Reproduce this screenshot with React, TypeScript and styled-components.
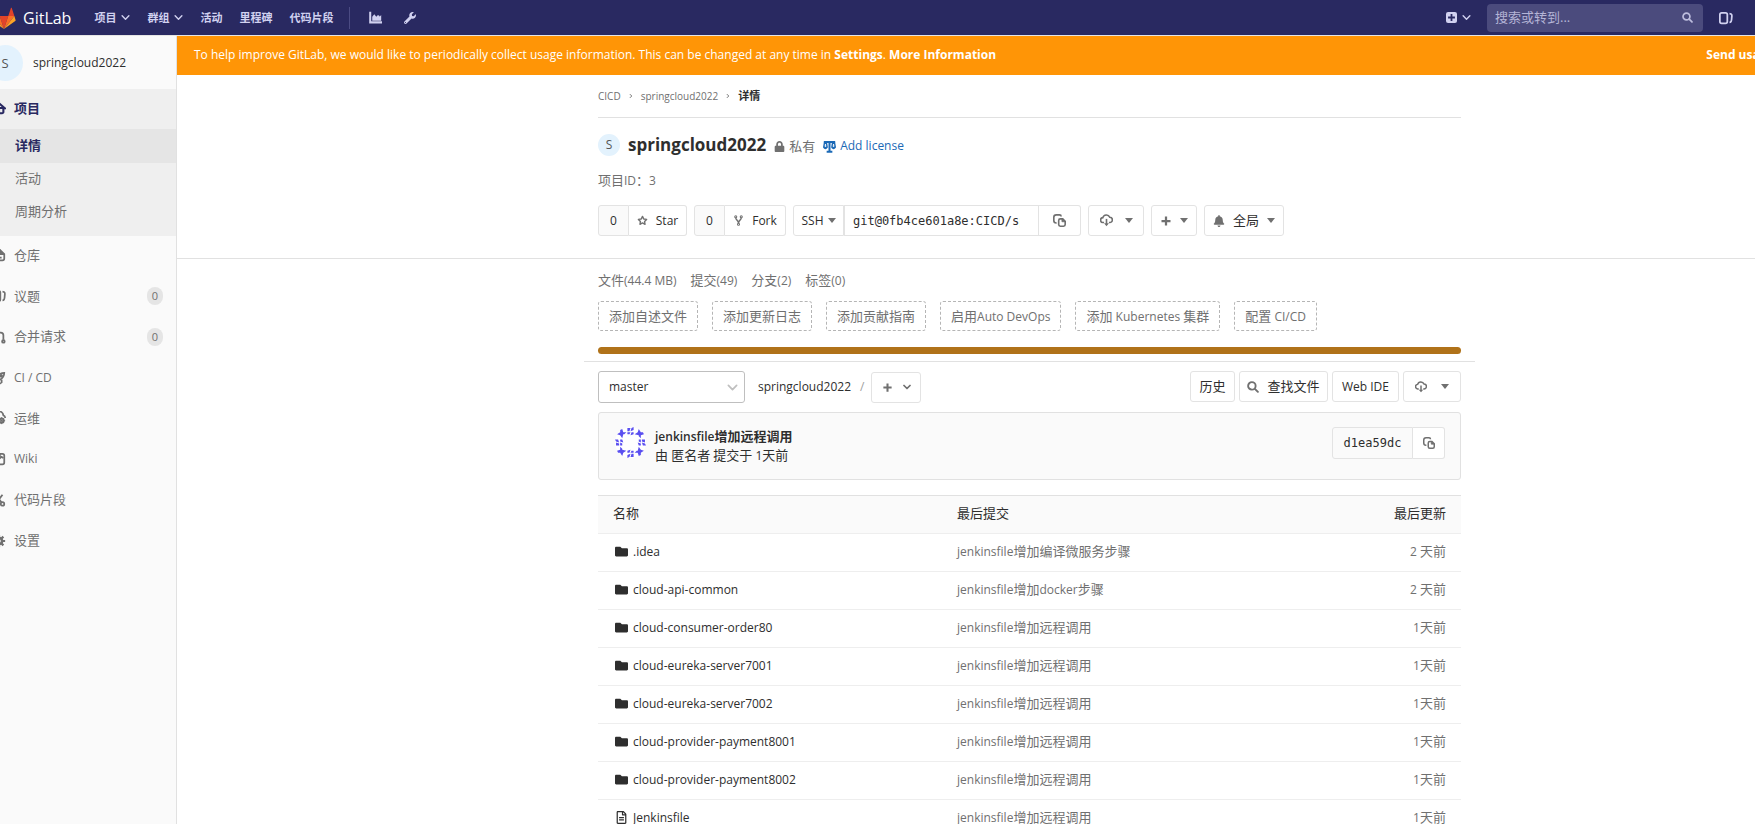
import React from 'react';
import styled, { createGlobalStyle, css } from 'styled-components';
import { FaBell, FaFolder, FaLock, FaRegFileAlt, FaWrench } from 'react-icons/fa';

const sans = '"Open Sans", "Noto Sans CJK SC", sans-serif';
const mono = '"DejaVu Sans Mono", monospace';

const GlobalStyle = createGlobalStyle`
  *, *::before, *::after { box-sizing: border-box; }
  body { margin: 0; background: #fff; color: #2e2e2e; font: 12px/18px ${sans}; }
  a { color: inherit; text-decoration: none; }
  button, input, select { font: inherit; color: inherit; margin: 0; }
  svg { display: block; flex: none; }
`;

/* ---------- Text ---------- */

const Han = styled.span`font-size: 13px;`;

const Mixed = ({ children }: { children: string }) => (
  <span>
    {children.split(/([\u4e00-\u9fff\uff1a]+)/).map((part, i) => (i % 2 ? <Han key={i}>{part}</Han> : part))}
  </span>
);

/* ---------- Icons ---------- */

type IconProps = { size?: number; color?: string };

const stroke = (paths: React.ReactNode, width = 2) =>
  ({ size = 13, color = 'currentColor' }: IconProps) => (
    <svg width={size} height={size} viewBox="0 0 16 16" fill="none" stroke={color} strokeWidth={width} aria-hidden>
      {paths}
    </svg>
  );

const HomeIcon = stroke(<><path d="M1 8.500l7-6 7 6" strokeLinejoin="round" strokeLinecap="round" /><path d="M3 8v4.500a1.500 1.500 0 0 0 1.500 1.500h7a1.500 1.500 0 0 0 1.500-1.500V8M8 9v5M3 8h10" /></>, 2.4);
const RepoIcon = stroke(<><path d="M9 2H4a1.500 1.500 0 0 0-1.500 1.500v9A1.500 1.500 0 0 0 4 14h8a2 2 0 0 0 2-2V7z" /><path d="M9 2v5h5" fill="currentColor" /><path d="M6 11h5" /></>);
const IssuesIcon = stroke(<><rect x="1" y="2" width="8.500" height="12" rx="2" /><path d="M12 3c3 0 3 2 2.500 5 0 3-1 5-2.500 5" /></>);
const MergeIcon = stroke(<><circle cx="3" cy="3" r="1.500" /><circle cx="3" cy="13" r="1.500" /><path d="M3 5v6" /><path d="M8 3h2a3 3 0 0 1 3 3v5" /><circle cx="13" cy="13" r="1.500" /></>);
const RocketIcon = stroke(<><path d="M14 2c-4 0-7 2-9 7l2 2c5-2 7-5 7-9z" /><path d="M6 5H3L1 8l4 1M11 10v3l-3 2-1-4" /><circle cx="10.500" cy="5.500" r="1" /></>);
const OpsIcon = stroke(<><path d="M4 12a3 3 0 0 1-1-6 5 5 0 0 1 10-1 3 3 0 0 1 2 3" /><circle cx="11" cy="11" r="2.500" /><path d="M11 7v8M7 11h8M8.500 8.500l5 5M13.500 8.500l-5 5" strokeWidth="1" /></>);
const WikiIcon = stroke(<><rect x="2" y="2" width="12" height="12" rx="2" /><path d="M9 2v5l2-1.500L13 7" /></>);
const SnippetIcon = stroke(<><path d="M4 2l7 9M12 2L5 11" /><circle cx="4" cy="12.500" r="2" /><circle cx="12" cy="12.500" r="2" /></>);
const GearIcon = stroke(<><circle cx="8" cy="8" r="3.500" strokeWidth="3" /><path d="M8 1v3M8 12v3M1 8h3M12 8h3M3 3l2 2M11 11l2 2M13 3l-2 2M5 11l-2 2" strokeWidth="2.500" /></>);
const ChevronIcon = stroke(<path d="M2 5l6 6 6-6" strokeLinecap="round" strokeLinejoin="round" />, 2.5);
const BoldChevronIcon = stroke(<path d="M2 5l6 6 6-6" strokeLinecap="round" strokeLinejoin="round" />, 3.5);
const CrumbIcon = stroke(<path d="M5 3l5 5-5 5" />, 2.5);
const SearchIcon = stroke(<><circle cx="6.500" cy="6.500" r="5" /><path d="M10.500 10.500l4 4" strokeLinecap="round" /></>, 2.5);
const PlusIcon = stroke(<path d="M8 2v12M2 8h12" />, 3);
const StarIcon = stroke(<path d="M8 2l1.800 3.800 4.200.6-3 2.900.7 4.200L8 11.500l-3.700 2 .7-4.200-3-2.900 4.200-.6z" strokeLinejoin="round" />);
const ForkIcon = stroke(<><circle cx="4" cy="2.500" r="1.500" /><circle cx="12" cy="2.500" r="1.500" /><circle cx="8" cy="13.500" r="1.500" /><path d="M4 4c0 4 4 3 4 8M12 4c0 4-4 3-4 8" strokeWidth="2" /></>, 1.5);
const CopyIcon = stroke(<><path d="M4.500 11H4a3 3 0 0 1-3-3V4a3 3 0 0 1 3-3h4a2 2 0 0 1 2 2" /><path d="M9 6h3l3 3v4a2 2 0 0 1-2 2H9a2 2 0 0 1-2-2V8a2 2 0 0 1 2-2z" /><path d="M11 5.500v4h4z" fill="currentColor" strokeWidth="1" /></>);
const CloudIcon = stroke(<><path d="M5 10.500H4a3 3 0 0 1-.5-6A4.500 4.500 0 0 1 12 4a3.200 3.200 0 0 1 0 6.500h-1" /><path d="M8 6v7" /><path d="M5 11.500h6L8 15z" fill="currentColor" stroke="none" /></>);
const ChartIcon = stroke(<><path d="M1.500 1v13H16" strokeWidth="2.500" /><path d="M4 12V7l2.500-3L9 7l2-2 2 1v1l2-2v7z" fill="currentColor" stroke="none" /></>);
const ScaleIcon = stroke(<><path d="M8 2v12M4.500 14.500h7M1 2.500h14" strokeWidth="2.500" /><path d="M0 9l1-6h4l1 6c-1 3-5 3-6 0zM10 9l1-6h4l1 6c-1 3-5 3-6 0z" fill="currentColor" stroke="none" /><path d="M2.500 8L3 5l.5 3zM12.500 8l.5-3 .5 3z" stroke="#fff" strokeWidth="1" /></>);
const PlusSquareIcon = ({ size = 11 }: IconProps) => (
  <svg width={size} height={size} viewBox="0 0 16 16" aria-hidden>
    <path fill="currentColor" fillRule="evenodd" d="M3 0h10a3 3 0 0 1 3 3v10a3 3 0 0 1-3 3H3a3 3 0 0 1-3-3V3a3 3 0 0 1 3-3zm3.700 3v3.700H3v2.600h3.700V13h2.600V9.300H13V6.700H9.300V3z" />
  </svg>
);
const Caret = () => (
  <svg width="8" height="5" viewBox="0 0 8 5" aria-hidden><path d="M0 0h8L4 5z" fill="#707070" /></svg>
);
const Tanuki = () => (
  <svg width="24" height="22" viewBox="0 0 36 34" aria-hidden>
    <path fill="#e24329" d="M2 14l9.400 0L7.300 1.500c-.2-.7-1.100-.7-1.300 0z" />
    <path fill="#e24329" d="M34 14h-9.400l4.100-12.500c.2-.7 1.100-.7 1.300 0z" />
    <path fill="#e24329" d="M18 34l6.600-20H11.400z" />
    <path fill="#fc6d26" d="M18 34l-6.600-20H2zM18 34l6.600-20H34z" />
    <path fill="#fca326" d="M2 14L.1 20c-.2.600 0 1.200.5 1.600L18 34zM34 14l1.900 6c.2.600 0 1.200-.5 1.600L18 34z" />
  </svg>
);
const Identicon = () => {
  const side = <path d="M12 1l3 0-1 3h-2zM16 1l2-1v3l-3 1zM12 5l3 0-1 2h-2zM16 5l2 0v2l-3 1z" />;
  const corner = <path d="M5 3l2-1 1 3h3l-2 2H8L7 11 5 8 2 7l3-2z" />;
  return (
    <svg width="31" height="31" viewBox="0 0 30 30" fill="#5a4ff0" aria-hidden>
      <circle cx="15" cy="15" r="15" fill="#fff" />
      {[0, 90, 180, 270].map((a) => <g key={a} transform={`rotate(${a} 15 15)`}>{side}{corner}</g>)}
    </svg>
  );
};

/* ---------- Page frame ---------- */

const Viewport = styled.div`overflow: hidden; height: 100vh;`;
const Page = styled.div`margin: 0 -127px 0 -21px; min-height: 100vh; display: flex; flex-direction: column;`;
const Body = styled.div`display: flex; flex: 1;`;
const Main = styled.main`flex: 1; min-width: 0;`;
const Container = styled.div`max-width: 891px; margin: 0 auto; padding: 0 14px;`;

/* ---------- Top bar ---------- */

const TopBar = styled.header`
  height: 36px; padding: 0 149px 0 13px; background: #292961; color: #d1d1f0;
  border-bottom: 1px solid #e5e5e5; display: flex; align-items: center;
`;
const Brand = styled.a`display: flex; align-items: center; gap: 7px; color: #fff; font-size: 16px; margin-right: 23px;`;
const Nav = styled.nav`display: flex; align-items: center; gap: 17px; font-size: 11px; font-weight: 700;`;
const NavLink = styled.a`display: flex; align-items: center; gap: 5px;`;
const NavDivider = styled.span`width: 1px; height: 22px; background: #4b4b83; margin: 0 2px 0 -1px;`;
const NavIcons = styled.div`display: flex; align-items: center; gap: 22px;`;
const TopRight = styled.div`margin-left: auto; display: flex; align-items: center; gap: 16px;`;
const SearchBox = styled.label`
  width: 216px; height: 28px; padding: 0 10px 0 8px; border-radius: 4px; background: #4b4b7d;
  display: flex; align-items: center; color: #bdbddd;
`;
const SearchInput = styled.input`
  flex: 1; min-width: 0; border: 0; padding: 0 0 2px; background: none; outline: 0; font-size: 13px;
  &::placeholder { color: #b4b4d6; opacity: 1; }
`;

/* ---------- Sidebar ---------- */

const Sidebar = styled.aside`width: 198px; flex: none; background: #fafafa; border-right: 1px solid #e1e1e1;`;
const Context = styled.a`height: 53px; padding-left: 8px; display: flex; align-items: center; gap: 10px;`;
const Avatar = styled.span<{ $size: number }>`
  width: ${(p) => p.$size}px; height: ${(p) => p.$size}px; border-radius: 50%; background: #e3f2fd;
  color: #555; display: flex; align-items: center; justify-content: center; flex: none;
  ${(p) => p.$size > 30 && css`font-size: 13px;`}
`;
const ActiveGroup = styled.div`background: #efefef; padding-bottom: 7px;`;
const SideLink = styled.a<{ $active?: boolean }>`
  height: 40px; padding: 0 13px 2px; display: flex; align-items: center; gap: 8px;
  color: ${(p) => (p.$active ? '#292961' : '#707070')}; font-weight: ${(p) => (p.$active ? 600 : 400)};
`;
const SubLink = styled.a<{ $active?: boolean }>`
  height: ${(p) => (p.$active ? 34 : 33)}px; padding: 0 0 2px 36px; display: flex; align-items: center;
  color: ${(p) => (p.$active ? '#292961' : '#707070')}; font-weight: ${(p) => (p.$active ? 600 : 400)};
  background: ${(p) => (p.$active ? '#e5e5e5' : 'transparent')};
`;
const SideList = styled.div`display: grid; grid-auto-rows: 1fr; align-items: center; min-height: 326px;`;
const Count = styled.span`
  margin-left: auto; min-width: 16px; text-align: center; border-radius: 8px; background: #e5e5e5;
  font-size: 11px; line-height: 18px;
`;

/* ---------- Banner ---------- */

const Banner = styled.div`
  height: 39px; padding: 0 78px 2px 17px; background: #ff9506; color: #fff;
  display: flex; align-items: center; justify-content: space-between; white-space: nowrap;
`;
const Strong = styled.a`font-weight: 700;`;

/* ---------- Project heading ---------- */

const Breadcrumbs = styled.nav`
  height: 43px; border-bottom: 1px solid #e1e1e1; display: flex; align-items: center; gap: 7px;
  color: #707070; font-size: 10px;
`;
const Current = styled.span`font-size: 11px; font-weight: 700; color: #2e2e2e;`;
const TitleRow = styled.div`display: flex; align-items: center; height: 22px; margin-top: 16px; gap: 8px;`;
const Title = styled.h1`margin: 0; font-size: 17px; line-height: 22px; font-weight: 700;`;
const Inline = styled.span<{ $blue?: boolean }>`
  display: flex; align-items: center; gap: 4px; padding-top: 2px; color: ${(p) => (p.$blue ? '#1b69b6' : '#707070')};
`;
const Muted = styled.p`margin: 15px 0; color: #707070;`;
const Actions = styled.div`display: flex; gap: 7px; padding-bottom: 22px;`;
const Rule = styled.div`border-top: 1px solid #e1e1e1;`;

const Button = styled.button<{ $w?: number; $gap?: number }>`
  height: 31px; padding: 0; border: 1px solid #e3e3e3; border-radius: 3px; background: #fff;
  display: inline-flex; align-items: center; justify-content: center; gap: ${(p) => p.$gap ?? 8}px; white-space: nowrap;
  ${(p) => p.$w && css`width: ${p.$w}px;`}
  svg { color: #707070; }
`;
const Group = styled.div`
  display: flex;
  > * { border-radius: 0; }
  > :first-child { border-radius: 3px 0 0 3px; }
  > :last-child { border-radius: 0 3px 3px 0; }
  > * + * { border-left: 0; }
`;
const Tally = styled.span`
  width: 31px; height: 31px; border: 1px solid #e3e3e3; background: #fafafa;
  display: flex; align-items: center; justify-content: center;
`;
const CloneInput = styled.input`
  width: 195px; height: 31px; padding: 0 18px 0 8px; border: 1px solid #e3e3e3; background: #fff;
  font: 12px/18px ${mono}; outline: 0;
`;

/* ---------- Repository ---------- */

const Stats = styled.div`display: flex; gap: 14px; padding: 12px 0 11px; color: #707070;`;
const Suggestions = styled.div`display: flex; gap: 14px;`;
const Suggestion = styled.a`
  height: 30px; padding: 0 10px; border: 1px dashed #b5b5b5; border-radius: 3px; color: #707070;
  display: flex; align-items: center; white-space: nowrap;
`;
const LanguageBar = styled.div`height: 7px; border-radius: 4px; background: #b07219; margin: 16px 0 7px;`;
const WideRule = styled.div`margin: 0 -14px 9px; border-top: 1px solid #e1e1e1;`;
const TreeBar = styled.div`display: flex; align-items: flex-start; justify-content: space-between; height: 32px; margin-bottom: 9px;`;
const TreeGroup = styled.div<{ $gap: number }>`display: flex; align-items: center; gap: ${(p) => p.$gap}px;`;
const SelectWrap = styled.label`
  position: relative; width: 147px; margin-right: 6px;
  svg { position: absolute; right: 7px; top: 11px; color: #bfbfbf; pointer-events: none; }
`;
const BranchSelect = styled.select`
  display: block; width: 100%; height: 32px; padding: 0 10px; border: 1px solid #bfbfbf; border-radius: 3px;
  background: #fff; appearance: none;
`;
const Slash = styled.span`color: #a0a0a0; margin-left: 2px;`;
const CommitBox = styled.section`
  height: 68px; padding: 14px 15px 0 16px; border: 1px solid #e1e1e1; border-radius: 3px; background: #fafafa;
  display: flex; align-items: flex-start; margin-bottom: 15px;
`;
const CommitText = styled.div`margin: 0 auto 0 9px; line-height: 19px;`;
const CommitTitle = styled.a`display: block; font-weight: 600;`;
const Sha = styled.span`
  height: 32px; padding: 0 9px; border: 1px solid #e3e3e3; font: 12px/30px ${mono}; width: 81px; text-align: center;
`;
const CopyButton = styled(Button)`height: 32px; width: 32px; padding: 0;`;

const Table = styled.table`width: 100%; border-collapse: collapse; table-layout: fixed; border-top: 1px solid #e1e1e1;`;
const Head = styled.th<{ $right?: boolean }>`
  height: 38px; padding: 0 15px 2px; background: #fafafa; border-bottom: 1px solid #eee; font-weight: 400;
  text-align: ${(p) => (p.$right ? 'right' : 'left')};
`;
const Cell = styled.td<{ $right?: boolean }>`
  height: 38px; padding: 0 15px 2px; border-bottom: 1px solid #eee; color: #707070; white-space: nowrap;
  text-align: ${(p) => (p.$right ? 'right' : 'left')};
`;
const FileLink = styled.a`display: flex; align-items: center; gap: 5px; padding-left: 2px; color: #2e2e2e;`;

const menu = [
  { label: '仓库', icon: RepoIcon },
  { label: '议题', icon: IssuesIcon, count: 0 },
  { label: '合并请求', icon: MergeIcon, count: 0 },
  { label: 'CI / CD', icon: RocketIcon },
  { label: '运维', icon: OpsIcon },
  { label: 'Wiki', icon: WikiIcon },
  { label: '代码片段', icon: SnippetIcon },
  { label: '设置', icon: GearIcon },
];

const files = [
  ['.idea', 'jenkinsfile增加编译微服务步骤', '2 天前'],
  ['cloud-api-common', 'jenkinsfile增加docker步骤', '2 天前'],
  ['cloud-consumer-order80', 'jenkinsfile增加远程调用', '1天前'],
  ['cloud-eureka-server7001', 'jenkinsfile增加远程调用', '1天前'],
  ['cloud-eureka-server7002', 'jenkinsfile增加远程调用', '1天前'],
  ['cloud-provider-payment8001', 'jenkinsfile增加远程调用', '1天前'],
  ['cloud-provider-payment8002', 'jenkinsfile增加远程调用', '1天前'],
  ['Jenkinsfile', 'jenkinsfile增加远程调用', '1天前'],
];

export default function App() {
  return (
    <Viewport>
      <GlobalStyle />
      <Page>
        <TopBar>
          <Brand href="#"><Tanuki />GitLab</Brand>
          <Nav>
            <NavLink href="#">项目<ChevronIcon size={9} /></NavLink>
            <NavLink href="#">群组<ChevronIcon size={9} /></NavLink>
            <NavLink href="#">活动</NavLink>
            <NavLink href="#">里程碑</NavLink>
            <NavLink href="#">代码片段</NavLink>
            <NavDivider />
            <NavIcons>
              <a href="#" aria-label="Instance statistics"><ChartIcon size={13} /></a>
              <a href="#" aria-label="Admin area"><FaWrench size={12} /></a>
            </NavIcons>
          </Nav>
          <TopRight>
            <NavLink href="#" aria-label="New"><PlusSquareIcon /><ChevronIcon size={9} /></NavLink>
            <SearchBox>
              <SearchInput placeholder="搜索或转到..." aria-label="搜索或转到" />
              <SearchIcon size={11} />
            </SearchBox>
            <a href="#" aria-label="Issues"><IssuesIcon size={14} /></a>
          </TopRight>
        </TopBar>
        <Body>
          <Sidebar>
            <Context href="#"><Avatar $size={36}>S</Avatar>springcloud2022</Context>
            <ActiveGroup>
              <SideLink href="#" $active><HomeIcon size={14} /><Mixed>项目</Mixed></SideLink>
              <SubLink href="#" $active><Mixed>详情</Mixed></SubLink>
              <SubLink href="#"><Mixed>活动</Mixed></SubLink>
              <SubLink href="#"><Mixed>周期分析</Mixed></SubLink>
            </ActiveGroup>
            <SideList>
              {menu.map(({ label, icon: Icon, count }) => (
                <SideLink href="#" key={label}>
                  <Icon size={14} /><Mixed>{label}</Mixed>
                  {count !== undefined && <Count>{count}</Count>}
                </SideLink>
              ))}
            </SideList>
          </Sidebar>
          <Main>
            <Banner>
              <span>
                To help improve GitLab, we would like to periodically collect usage information. This can be changed at any time in{' '}
                <Strong href="#">Settings</Strong>. <Strong href="#">More Information</Strong>
              </span>
              <Strong href="#">Send usage data</Strong>
            </Banner>
            <Container>
              <Breadcrumbs>
                <a href="#">CICD</a><CrumbIcon size={6} />
                <a href="#">springcloud2022</a><CrumbIcon size={6} />
                <Current>详情</Current>
              </Breadcrumbs>
              <TitleRow>
                <Avatar $size={22}>S</Avatar>
                <Title>springcloud2022</Title>
                <Inline><FaLock size={11} /><Mixed>私有</Mixed></Inline>
                <Inline as="a" href="#" $blue><ScaleIcon />Add license</Inline>
              </TitleRow>
              <Muted><Mixed>项目ID：3</Mixed></Muted>
              <Actions>
                <Group><Tally>0</Tally><Button $w={58}><StarIcon size={11} />Star</Button></Group>
                <Group><Tally>0</Tally><Button $w={61}><ForkIcon size={11} />Fork</Button></Group>
                <Group>
                  <Button $w={51} $gap={4}>SSH<Caret /></Button>
                  <CloneInput readOnly aria-label="Clone URL" value="git@0fb4ce601a8e:CICD/springcloud2022.git" />
                  <Button $w={42} aria-label="Copy URL"><CopyIcon /></Button>
                </Group>
                <Button $w={56} $gap={12} aria-label="Download"><CloudIcon /><Caret /></Button>
                <Button $w={46} aria-label="Add"><PlusIcon size={12} /><Caret /></Button>
                <Button $w={80}><FaBell size={12} /><Mixed>全局</Mixed><Caret /></Button>
              </Actions>
            </Container>
            <Rule />
            <Container>
              <Stats>
                {['文件(44.4 MB)', '提交(49)', '分支(2)', '标签(0)'].map((s) => <a href="#" key={s}><Mixed>{s}</Mixed></a>)}
              </Stats>
              <Suggestions>
                {['添加自述文件', '添加更新日志', '添加贡献指南', '启用Auto DevOps', '添加 Kubernetes 集群', '配置 CI/CD'].map((s) => (
                  <Suggestion href="#" key={s}><Mixed>{s}</Mixed></Suggestion>
                ))}
              </Suggestions>
              <LanguageBar />
              <WideRule />
              <TreeBar>
                <TreeGroup $gap={7}>
                  <SelectWrap>
                    <BranchSelect aria-label="Branch"><option>master</option></BranchSelect>
                    <ChevronIcon size={11} />
                  </SelectWrap>
                  <a href="#">springcloud2022</a>
                  <Slash>/</Slash>
                  <Button $w={50} $gap={10} aria-label="Add to tree"><PlusIcon size={11} /><BoldChevronIcon size={8} /></Button>
                </TreeGroup>
                <TreeGroup $gap={4}>
                  <Button $w={45}><Mixed>历史</Mixed></Button>
                  <Button $w={89}><SearchIcon size={12} /><Mixed>查找文件</Mixed></Button>
                  <Button $w={67}>Web IDE</Button>
                  <Button $w={58} $gap={14} aria-label="Download source"><CloudIcon size={12} /><Caret /></Button>
                </TreeGroup>
              </TreeBar>
              <CommitBox>
                <Identicon />
                <CommitText>
                  <CommitTitle href="#"><Mixed>jenkinsfile增加远程调用</Mixed></CommitTitle>
                  <Mixed>由 匿名者 提交于 1天前</Mixed>
                </CommitText>
                <Group><Sha>d1ea59dc</Sha><CopyButton aria-label="Copy commit SHA"><CopyIcon size={12} /></CopyButton></Group>
              </CommitBox>
              <Table>
                <colgroup><col width="344" /><col /><col width="120" /></colgroup>
                <thead>
                  <tr><Head><Mixed>名称</Mixed></Head><Head><Mixed>最后提交</Mixed></Head><Head $right><Mixed>最后更新</Mixed></Head></tr>
                </thead>
                <tbody>
                  {files.map(([name, message, time]) => (
                    <tr key={name}>
                      <Cell>
                        <FileLink href="#">
                          {name === 'Jenkinsfile' ? <FaRegFileAlt size={13} /> : <FaFolder size={13} />}
                          {name}
                        </FileLink>
                      </Cell>
                      <Cell><Mixed>{message}</Mixed></Cell>
                      <Cell $right><Mixed>{time}</Mixed></Cell>
                    </tr>
                  ))}
                </tbody>
              </Table>
            </Container>
          </Main>
        </Body>
      </Page>
    </Viewport>
  );
}
